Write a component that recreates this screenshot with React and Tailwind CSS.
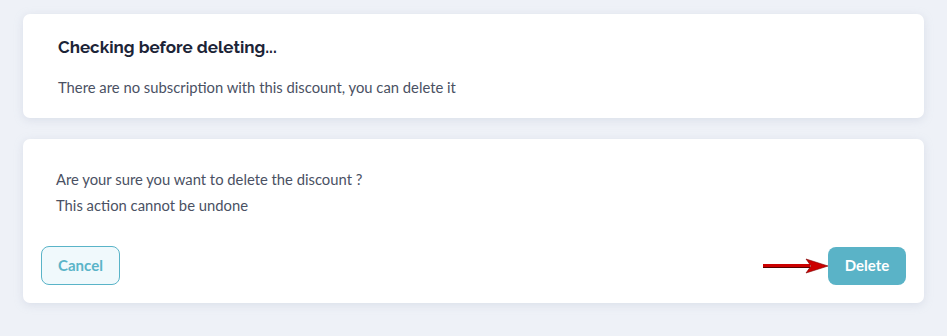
import React from "react";

const Arrow = () => (
  <svg width="68" height="16" viewBox="0 0 68 16" className="mr-[-2px]">
    <line x1="1" y1="8.5" x2="48" y2="8.5" stroke="#5a0000" strokeWidth="3" />
    <line x1="1" y1="7.5" x2="48" y2="7.5" stroke="#cc0000" strokeWidth="3" />
    <path d="M44 1 L66 8 L44 15 L49 8 Z" fill="#cc0000" stroke="#7a0000" strokeWidth="0.6" />
  </svg>
);

const App = () => {
  return (
    <div className="w-[947px] h-[336px] bg-[#eef1f7] pt-[14px] px-[23px] font-['Lato','Liberation_Sans',sans-serif]">
      <div className="bg-white rounded-[7px] shadow-[0_2px_8px_rgba(180,190,210,0.35)] h-[104px] pl-[35px] pt-[21px]">
        <p className="font-['Raleway','Open_Sans',sans-serif] font-bold text-[17px] text-[#1c2437]">
          Checking before deleting...
        </p>
        <p className="mt-[15px] text-[14.8px] text-[#4a5163]">
          There are no subscription with this discount, you can delete it
        </p>
      </div>

      <div className="mt-[21px] bg-white rounded-[7px] shadow-[0_2px_8px_rgba(180,190,210,0.35)] h-[164px] pt-[27px] px-[18px]">
        <div className="pl-[15px] text-[14.8px] text-[#4a5163] leading-[26px]">
          <p>Are your sure you want to delete the discount ?</p>
          <p>This action cannot be undone</p>
        </div>
        <div className="mt-[28px] flex items-center justify-between">
          <button className="w-[79px] h-[39px] rounded-[8px] border border-[#5ab4c8] bg-[#f0f9fc] text-[#5ab4c8] font-bold text-[15px]">
            Cancel
          </button>
          <div className="flex items-center">
            <Arrow />
            <button className="w-[78px] h-[38px] rounded-[8px] bg-[#5ab3c7] text-white font-bold text-[15px]">
              Delete
            </button>
          </div>
        </div>
      </div>
    </div>
  );
};

export default App;
